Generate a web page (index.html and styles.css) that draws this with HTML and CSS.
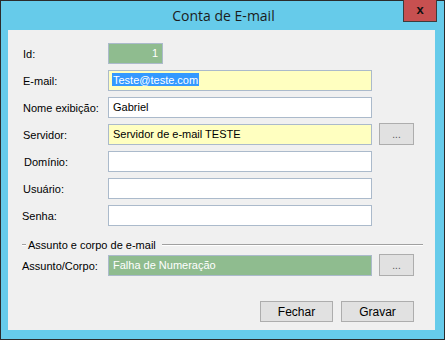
FILE: index.html
```html
<!DOCTYPE html>
<html lang="pt-br">
<head>
    <meta charset="UTF-8">
    <title>Conta de E-mail</title>
    <link rel="stylesheet" href="styles.css">
</head>
<body>
    <div class="window">
        <div class="titlebar">
            <span class="title">Conta de E-mail</span>
            <button class="close-btn">x</button>
        </div>

        <div class="client">
            <!-- Dados da conta -->
            <div class="form">
                <div class="row">
                    <label>Id:</label>
                    <div class="field field-id green">1</div>
                </div>
                <div class="row">
                    <label>E-mail:</label>
                    <div class="field yellow"><span class="selected">Teste@teste.com</span></div>
                </div>
                <div class="row">
                    <label>Nome exibição:</label>
                    <div class="field">Gabriel</div>
                </div>
                <div class="row">
                    <label>Servidor:</label>
                    <div class="field yellow">Servidor de e-mail TESTE</div>
                    <button class="btn btn-dots">...</button>
                </div>
                <div class="row">
                    <label class="nudge">Domínio:</label>
                    <div class="field"></div>
                </div>
                <div class="row">
                    <label>Usuário:</label>
                    <div class="field"></div>
                </div>
                <div class="row">
                    <label class="pull">Senha:</label>
                    <div class="field"></div>
                </div>
            </div>

            <!-- Grupo assunto -->
            <div class="group">
                <span class="group-line short"></span>
                <span class="group-title">Assunto e corpo de e-mail</span>
                <span class="group-line"></span>
            </div>
            <div class="row row-subject">
                <label class="pull">Assunto/Corpo:</label>
                <div class="field green">Falha de Numeração</div>
                <button class="btn btn-dots">...</button>
            </div>

            <div class="actions">
                <button class="btn btn-action">Fechar</button>
                <button class="btn btn-action">Gravar</button>
            </div>
        </div>
    </div>
</body>
</html>
```

FILE: styles.css
```css
body {
    margin: 0;
    font-family: "Liberation Sans", Arial, sans-serif;
    font-size: 11px;
    color: #000;
}

/* Janela */
.window {
    position: relative;
    width: 443px;
    height: 338px;
    border: 1px solid #2b2b2b;
    background-color: #66cbea;
}

.titlebar {
    height: 29px;
    display: flex;
    justify-content: center;
    align-items: center;
}

.title {
    font-family: "Open Sans", sans-serif;
    font-size: 14px;
    color: #1c1c1c;
    margin-left: 2px;
}

.close-btn {
    position: absolute;
    top: -1px;
    right: 7px;
    width: 34px;
    height: 22px;
    padding: 0 0 3px;
    background-color: #c75050;
    border: 1px solid #3c3c3c;
    border-top: none;
    font-family: "Liberation Sans", Arial, sans-serif;
    font-weight: bold;
    font-size: 13px;
    color: #111;
}

.client {
    margin-left: 7px;
    width: 427px;
    height: 300px;
    box-sizing: border-box;
    padding: 13px 21px 0 15px;
    background-color: #f0f0f0;
}

/* Linhas do formulario */
.form {
    display: flex;
    flex-direction: column;
    gap: 6px;
}

.row {
    display: grid;
    grid-template-columns: 78px 264px 35px;
    column-gap: 7px;
    align-items: center;
    height: 21px;
}

.row label {
    white-space: nowrap;
}

.row label.nudge {
    margin-left: 1px;
}

.row label.pull {
    margin-left: -1px;
}

.field {
    height: 21px;
    box-sizing: border-box;
    border: 1px solid #abbacb;
    background-color: #fff;
    padding: 0 4px;
    line-height: 19px;
    white-space: nowrap;
    overflow: hidden;
}

.field-id {
    width: 55px;
    text-align: right;
    color: #fff;
}

.yellow {
    background-color: #ffffc0;
}

.green {
    background-color: #8fbc8f;
    color: #fff;
}

.selected {
    background-color: #3399ff;
    color: #fff;
    margin-left: -1px;
    padding: 1px 1px 0;
}

/* Botoes */
.btn {
    font-family: "Liberation Sans", Arial, sans-serif;
    font-size: 11px;
    background-color: #e1e1e1;
    border: 1px solid #adadad;
    color: #000;
    padding: 0;
}

.btn-dots {
    height: 22px;
    margin-top: -1px;
    color: #555;
    font-size: 10px;
}

/* Grupo */
.group {
    display: flex;
    align-items: center;
    height: 14px;
    margin: 12px -9px 0 -1px;
}

.group-line {
    flex: 1;
    height: 0;
    border-top: 1px solid #a0a0a0;
    border-bottom: 1px solid #fff;
}

.group-line.short {
    flex: 0 0 4px;
}

.group-title {
    margin: 0 6px 0 2px;
}

.row-subject {
    margin-top: 3px;
}

.actions {
    display: flex;
    justify-content: flex-end;
    gap: 8px;
    margin-top: 25px;
}

.btn-action {
    width: 73px;
    height: 21px;
    font-size: 12px;
}
```
